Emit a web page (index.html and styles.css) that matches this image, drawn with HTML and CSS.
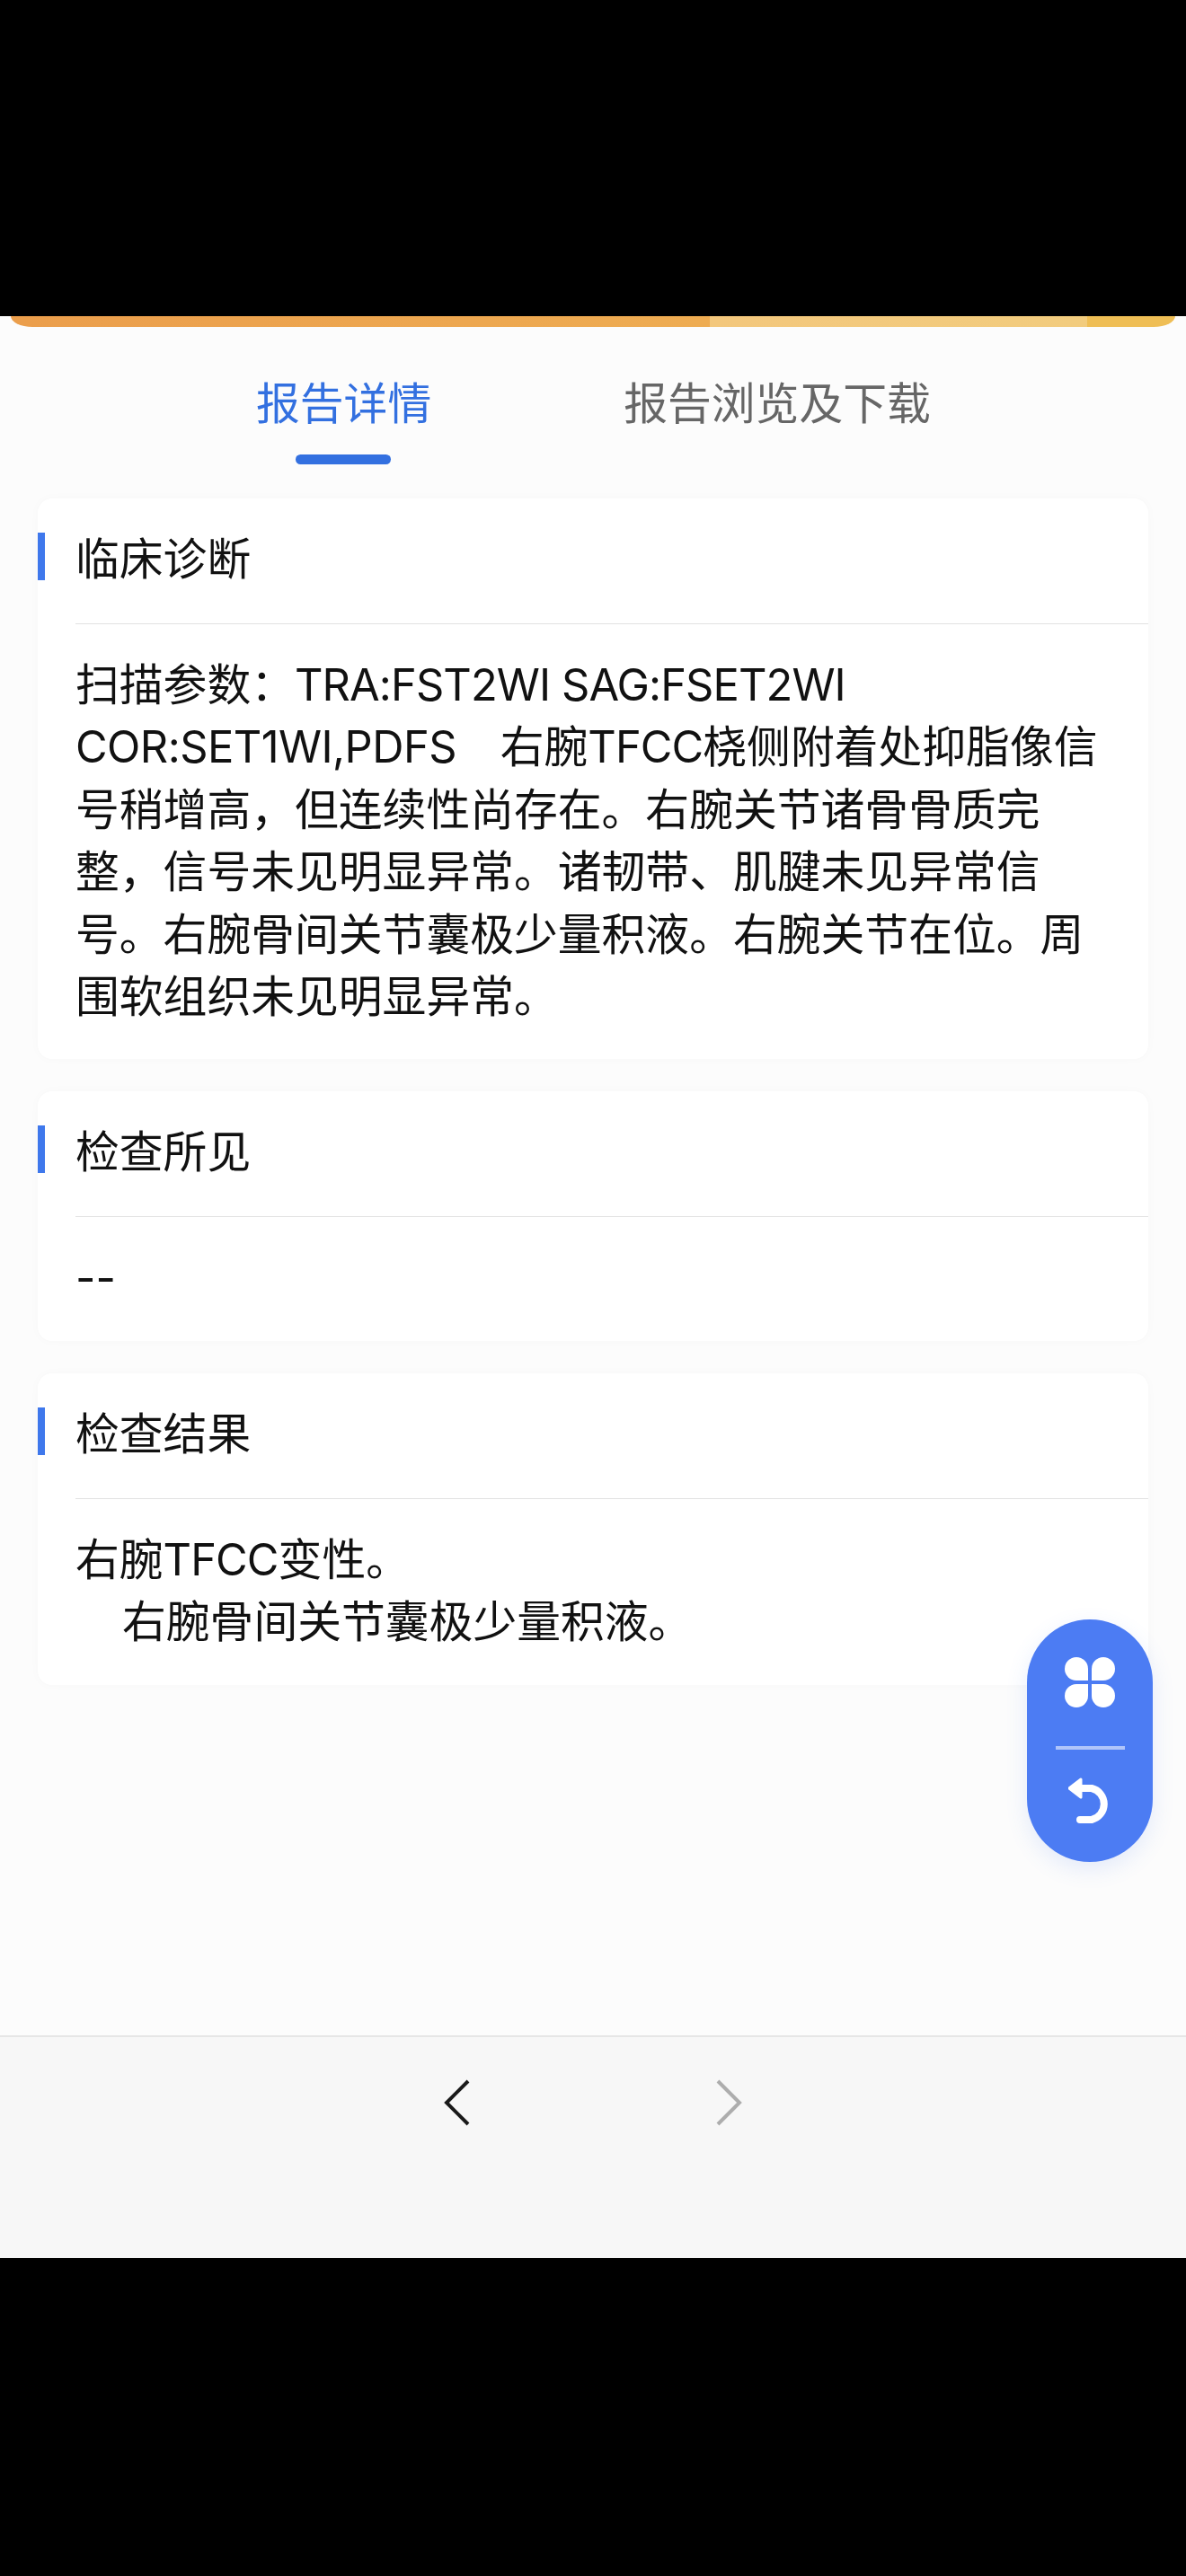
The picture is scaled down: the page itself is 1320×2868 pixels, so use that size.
FILE: index.html
```html
<!DOCTYPE html>
<html lang="zh-CN">
<head>
  <meta charset="UTF-8" />
  <title>报告详情</title>
  <link rel="stylesheet" href="styles.css">
</head>
<body>

<div class="black-top"></div>

<div class="screen">
  <div class="banner"></div>

  <div class="tabs">
    <div class="tab active">报告详情</div>
    <div class="tab">报告浏览及下载</div>
  </div>

  <div class="cards">
    <section class="card">
      <h3 class="card-title">临床诊断</h3>
      <p class="card-body">扫描参数：<span class="latin">TRA:FST2WI SAG:FSET2WI</span><br><span class="latin wide">COR:SET1WI,PDFS</span>　右腕<span class="latin">TFCC</span>桡侧附着处抑脂像信<br>号稍增高，但连续性尚存在。右腕关节诸骨骨质完<br>整，信号未见明显异常。诸韧带、肌腱未见异常信<br>号。右腕骨间关节囊极少量积液。右腕关节在位。周<br>围软组织未见明显异常。</p>
    </section>
    <section class="card">
      <h3 class="card-title">检查所见</h3>
      <p class="card-body">--</p>
    </section>
    <section class="card">
      <h3 class="card-title">检查结果</h3>
      <p class="card-body">右腕<span class="latin">TFCC</span>变性。<br><span class="indent">右腕骨间关节囊极少量积液。</span></p>
    </section>
  </div>

  <div class="float-btn">
    <svg class="icon-grid" width="56" height="56" viewBox="0 0 56 56">
      <path d="M26 26H13A13 13 0 1 1 26 13Z" fill="#fff"/>
      <path d="M30 26H43A13 13 0 1 0 30 13Z" fill="#fff"/>
      <path d="M26 30H13A13 13 0 1 0 26 43Z" fill="#fff"/>
      <path d="M30 30H43A13 13 0 1 1 30 43Z" fill="#fff"/>
    </svg>
    <div class="float-line"></div>
    <svg class="icon-back" width="48" height="52" viewBox="0 0 48 52">
      <path d="M14 2 1 12 14 22Z" fill="#fff" stroke="#fff" stroke-width="3" stroke-linejoin="round"/>
      <path d="M12 12H26A18 18 0 0 1 26 47H13" fill="none" stroke="#fff" stroke-width="8" stroke-linecap="round"/>
    </svg>
  </div>

  <div class="bottom-bar">
    <svg width="36" height="56" viewBox="0 0 36 56" class="nav-arrow">
      <path d="M31 4 7 28 31 52" fill="none" stroke="#1a1a1a" stroke-width="4"/>
    </svg>
    <svg width="36" height="56" viewBox="0 0 36 56" class="nav-arrow">
      <path d="M5 4 29 28 5 52" fill="none" stroke="#adadad" stroke-width="4"/>
    </svg>
  </div>
</div>

<div class="black-bottom"></div>

</body>
</html>
```

FILE: styles.css
```css
html, body {
  margin: 0;
  padding: 0;
}
body {
  width: 1320px;
  height: 2868px;
  display: flex;
  flex-direction: column;
  background: #000;
  font-family: Inter, "Noto Sans CJK SC", sans-serif;
  overflow: hidden;
}
.black-top {
  height: 352px;
  flex: none;
}
.black-bottom {
  height: 354px;
  flex: none;
}
.screen {
  flex: 1;
  position: relative;
  display: flex;
  flex-direction: column;
  background: #fcfcfc;
}
.banner {
  height: 12px;
  margin: 0 12px;
  flex: none;
  border-radius: 0 0 24px 24px / 0 0 12px 12px;
  background: linear-gradient(90deg, #eb9e4c 0%, #eeac52 60%, #f3c77c 60%, #f2cc7e 92.4%, #efbe55 92.4%);
}
.tabs {
  height: 191px;
  flex: none;
  display: flex;
  box-sizing: border-box;
  padding: 51px 0 0 285px;
  gap: 214px;
}
.tab {
  position: relative;
  font-size: 48.8px;
  line-height: 70px;
  height: 70px;
  color: #666;
}
.tab.active {
  color: #3370e0;
}
.tab.active::after {
  content: "";
  position: absolute;
  left: 44px;
  top: 91px;
  width: 106px;
  height: 11px;
  border-radius: 6px;
  background: #3370e0;
}
.cards {
  flex: 1;
  padding: 0 42px;
  display: flex;
  flex-direction: column;
  gap: 36px;
}
.card {
  background: #fff;
  border-radius: 16px;
  box-shadow: 0 0 12px rgba(0, 0, 0, 0.025);
}
.card-title {
  margin: 0 0 0 42px;
  padding-top: 41px;
  height: 98px;
  box-sizing: content-box;
  border-bottom: 1px solid #e2e2e2;
  font-size: 48.8px;
  font-weight: 400;
  line-height: 54px;
  color: #111;
  position: relative;
}
.card-title::before {
  content: "";
  position: absolute;
  left: -42px;
  top: 38px;
  width: 8px;
  height: 53px;
  background: #3f78ec;
}
.card-body {
  margin: 0;
  padding: 33px 42px 35px;
  font-size: 48.8px;
  line-height: 69.4px;
  color: #111;
}
.latin {
  letter-spacing: -0.9px;
}
.latin.wide {
  letter-spacing: -0.55px;
}
.indent {
  margin-left: 52px;
}
.float-btn {
  position: absolute;
  left: 1143px;
  top: 1451px;
  width: 140px;
  height: 270px;
  border-radius: 70px;
  background: #4c7cf3;
  box-shadow: 0 8px 24px rgba(76, 124, 243, 0.14);
  display: flex;
  flex-direction: column;
  align-items: center;
}
.icon-grid {
  margin-top: 42px;
}
.float-line {
  width: 77px;
  height: 4px;
  margin-top: 43px;
  flex: none;
  background: #b0c5fa;
}
.icon-back {
  margin-top: 31px;
}
.bottom-bar {
  height: 248px;
  flex: none;
  border-top: 2px solid #e6e6e6;
  background: #f7f7f7;
  display: flex;
  justify-content: flex-start;
  gap: 268px;
  padding: 45px 0 0 490px;
  box-sizing: border-box;
}
```
